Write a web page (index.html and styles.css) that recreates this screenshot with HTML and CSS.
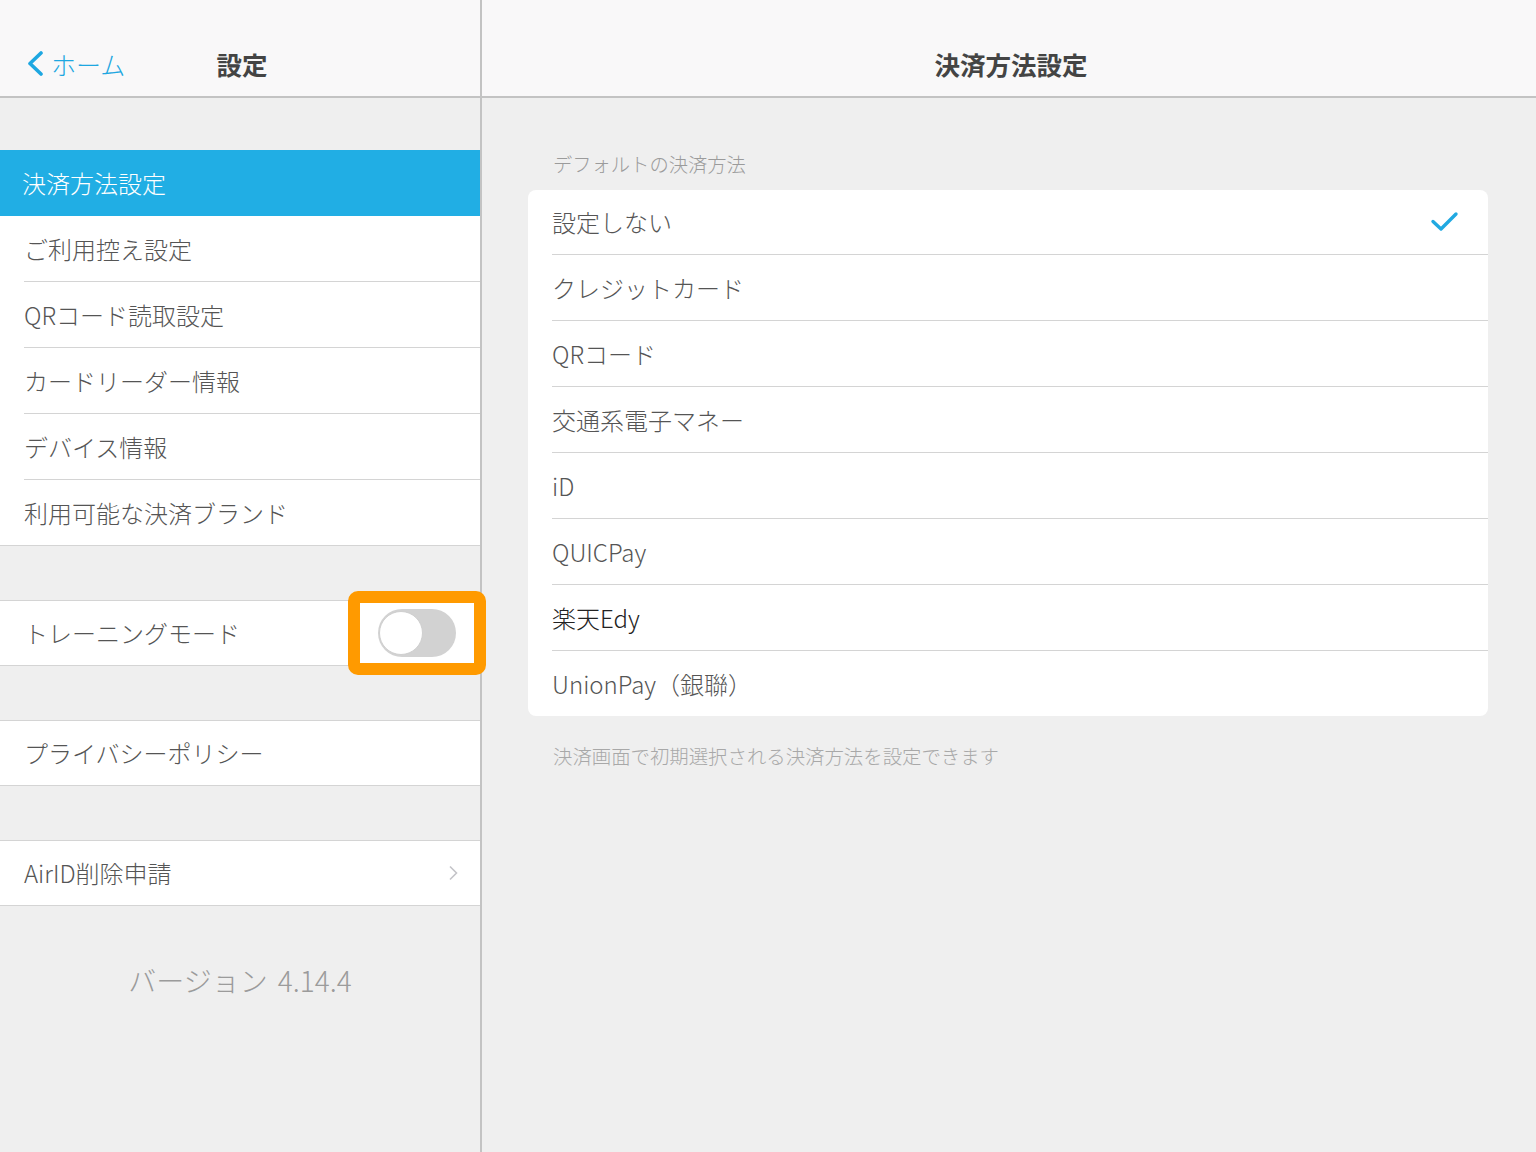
FILE: index.html
```html
<!DOCTYPE html>
<html lang="ja">
<head>
    <meta charset="UTF-8">
    <meta name="viewport" content="width=device-width, initial-scale=1.0">
    <title>決済方法設定</title>
    <link rel="stylesheet" href="styles.css">
</head>
<body>
    <div class="sidebar">
        <div class="nav-bar">
            <a class="back" href="#">
                <svg width="18" height="26" viewBox="0 0 18 26"><polyline points="14,2 3,12.5 14,23" fill="none" stroke="#1ea7e1" stroke-width="3.6" stroke-linecap="round" stroke-linejoin="round"/></svg>
                <span>ホーム</span>
            </a>
            <div class="nav-title">設定</div>
        </div>

        <div class="menu">
            <div class="group">
                <div class="row selected">決済方法設定</div>
                <div class="row">ご利用控え設定</div>
                <div class="row">QRコード読取設定</div>
                <div class="row">カードリーダー情報</div>
                <div class="row">デバイス情報</div>
                <div class="row">利用可能な決済ブランド</div>
            </div>

            <div class="group">
                <div class="row">
                    <span>トレーニングモード</span>
                    <div class="switch">
                        <div class="knob"></div>
                        <div class="highlight"></div>
                    </div>
                </div>
            </div>

            <div class="group">
                <div class="row">プライバシーポリシー</div>
            </div>

            <div class="group">
                <div class="row">
                    <span>AirID削除申請</span>
                    <svg class="chevron" width="10" height="16" viewBox="0 0 10 16"><polyline points="2,1.5 8.5,8 2,14.5" fill="none" stroke="#c4c4c8" stroke-width="1.6"/></svg>
                </div>
            </div>

            <div class="version">バージョン 4.14.4</div>
        </div>
    </div>

    <div class="content">
        <div class="nav-bar">
            <div class="nav-title">決済方法設定</div>
        </div>

        <div class="section">
            <div class="section-header">デフォルトの決済方法</div>
            <div class="card">
                <div class="option">
                    <span>設定しない</span>
                    <svg class="check" width="30" height="22" viewBox="0 0 30 22"><polyline points="3,10.5 11,18 26,3" fill="none" stroke="#21a9e1" stroke-width="3.4" stroke-linecap="round" stroke-linejoin="round"/></svg>
                </div>
                <div class="option">クレジットカード</div>
                <div class="option">QRコード</div>
                <div class="option">交通系電子マネー</div>
                <div class="option">iD</div>
                <div class="option">QUICPay</div>
                <div class="option dark">楽天Edy</div>
                <div class="option">UnionPay（銀聯）</div>
            </div>
            <div class="section-footer">決済画面で初期選択される決済方法を設定できます</div>
        </div>
    </div>
</body>
</html>
```

FILE: styles.css
```css
body {
    margin: 0;
    height: 100vh;
    display: flex;
    background-color: #efefef;
    color: #555;
    font-family: "Noto Sans CJK JP", "Noto Sans", sans-serif;
    font-weight: 300;
    overflow: hidden;
}

/* left column */
.sidebar {
    width: 480px;
    border-right: 2px solid #c3c3c3;
    position: relative;
    z-index: 1;
    display: flex;
    flex-direction: column;
}

.nav-bar {
    height: 98px;
    border-bottom: 2px solid #c3c3c3;
    background-color: #f9f8f9;
    position: relative;
    display: flex;
    align-items: flex-end;
    justify-content: center;
    padding-bottom: 14px;
    box-sizing: border-box;
    flex-shrink: 0;
}

.nav-title {
    font-size: 25.5px;
    font-weight: bold;
    color: #444;
    line-height: 36px;
    margin-left: 4px;
}

.back {
    position: absolute;
    left: 27px;
    bottom: 14px;
    display: flex;
    align-items: center;
    gap: 6px;
    color: #1ea7e1;
    text-decoration: none;
    font-size: 25px;
    line-height: 36px;
}

.menu {
    padding-top: 52px;
}

.group {
    background-color: white;
    border-top: 1px solid #d4d4d4;
    border-bottom: 1px solid #d4d4d4;
    margin-bottom: 54px;
}

.row {
    height: 65px;
    padding: 0 24px 1px;
    box-sizing: border-box;
    display: flex;
    align-items: center;
    justify-content: space-between;
    font-size: 24px;
    position: relative;
}

.row:only-child {
    height: 64px;
}

.row + .row {
    border-top: 1px solid #d4d4d4;
    margin-left: 24px;
    padding-left: 0;
    height: 66px;
}

.row.selected {
    background-color: #21aee4;
    color: white;
    padding-left: 22px;
    margin-top: -1px;
    height: 66px;
}

.row.selected + .row {
    border-top: none;
    height: 65px;
}

.switch {
    width: 78px;
    height: 48px;
    border-radius: 24px;
    background-color: #d2d2d2;
    position: relative;
}

.knob {
    position: absolute;
    left: 1px;
    top: 2px;
    width: 42px;
    height: 42px;
    border-radius: 50%;
    background-color: white;
    border: 1px solid #cfcfcf;
}

.highlight {
    position: absolute;
    left: -30px;
    right: -30px;
    top: -18px;
    bottom: -18px;
    border: 12px solid #ff9a00;
    border-radius: 10px;
}

.chevron {
    margin-right: -2px;
}

.version {
    text-align: center;
    font-size: 28px;
    color: #9b9b9b;
    word-spacing: 4px;
}

/* right column */
.content {
    flex: 1;
    display: flex;
    flex-direction: column;
}

.section {
    padding: 51px 48px 0 46px;
}

.section-header {
    font-size: 19.3px;
    color: #9b9b9b;
    padding-left: 25px;
    line-height: 30px;
    margin-bottom: 11px;
}

.card {
    background-color: white;
    border-radius: 8px;
    overflow: hidden;
}

.option {
    height: 66px;
    box-sizing: border-box;
    margin-left: 24px;
    padding: 0 28px 1px 0;
    display: flex;
    align-items: center;
    justify-content: space-between;
    font-size: 24px;
}

.option:first-child {
    height: 64px;
}

.option + .option {
    border-top: 1px solid #d4d4d4;
}

.option.dark {
    color: #222;
}

.section-footer {
    font-size: 19.4px;
    color: #a8a8a8;
    padding-left: 25px;
    margin-top: 25px;
}
```
